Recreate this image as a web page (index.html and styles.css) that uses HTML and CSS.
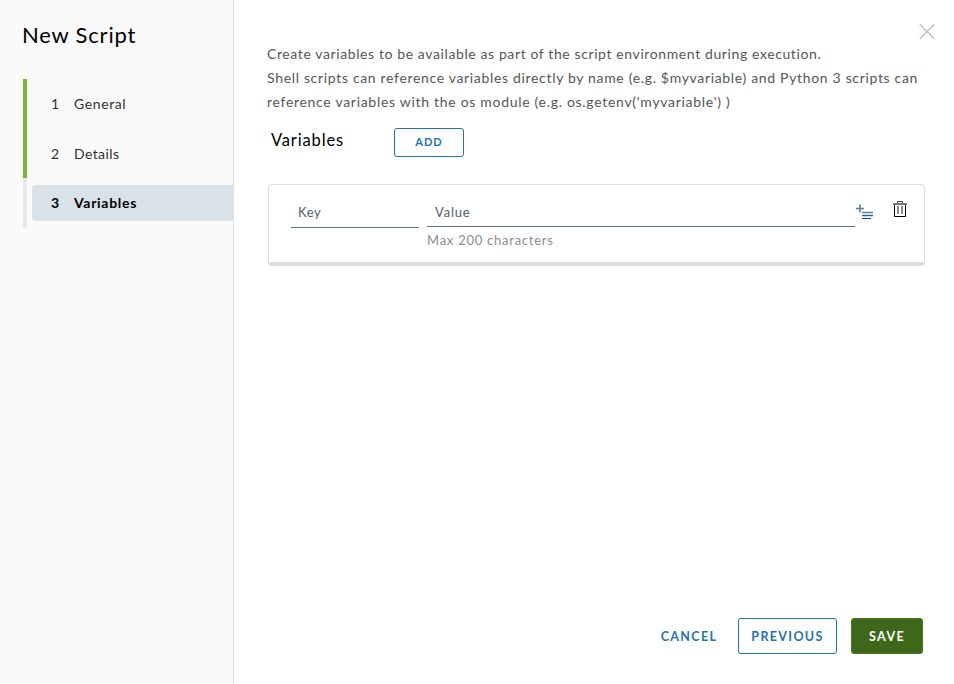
FILE: index.html
```html
<!DOCTYPE html>
<html lang="en">
<head>
<meta charset="utf-8">
<title>New Script</title>
<link rel="stylesheet" href="styles.css">
</head>
<body>
<div class="wizard">
  <aside class="sidebar">
    <h1 class="title">New Script</h1>
    <ol class="steps">
      <li class="step first"><span class="num">1</span><span class="label general">General</span></li>
      <li class="step second"><span class="num">2</span><span class="label details">Details</span></li>
      <li class="step active"><div class="pill"><span class="num">3</span><span class="label variables">Variables</span></div></li>
    </ol>
  </aside>
  <main class="content">
    <header class="top">
      <button class="close" aria-label="Close"><svg width="16" height="16" viewBox="0 0 16 16"><path d="M1.2 0.7 14.8 14.3M14.8 0.7 1.2 14.3" fill="none" stroke="#c0c0c0" stroke-width="1.5" stroke-linecap="round"/></svg></button>
    </header>
    <div class="intro">
      <div class="line one">Create variables to be available as part of the script environment during execution.</div>
      <div class="line two">Shell scripts can reference variables directly by name (e.g. $myvariable) and Python 3 scripts can</div>
      <div class="line three">reference variables with the os module (e.g. os.getenv('myvariable') )</div>
    </div>
    <div class="heading">
      <h2 class="subtitle">Variables</h2>
      <button class="btn small">ADD</button>
    </div>
    <section class="card">
      <div class="field key"><span class="placeholder">Key</span></div>
      <div class="value-group">
        <div class="field value"><span class="placeholder">Value</span></div>
        <div class="hint">Max 200 characters</div>
      </div>
      <svg class="add-text" width="18" height="18" viewBox="0 0 18 18"><path d="M4 .5v8M0 4.5h8" stroke="#5a83a1" stroke-width="1.7"/><path d="M6 8.5h11" stroke="#5a83a1" stroke-width="1.5"/><path d="M6 11.5h11" stroke="#34658a" stroke-width="1.5"/><path d="M6 14.5h9" stroke="#08477a"/></svg>
      <svg class="trash" width="14" height="18" viewBox="0 0 14 18"><path d="M0 3h14" stroke="#777" stroke-width="2"/><path d="M4.5 2V.5h5V2" fill="none" stroke="#444"/><path d="M1.5 4v11.5h11V4" fill="none" stroke="#000"/><path d="M5 5v8M9 5v8" stroke="#888" stroke-width="2"/></svg>
    </section>
    <footer class="actions">
      <button class="btn link">CANCEL</button>
      <button class="btn previous">PREVIOUS</button>
      <button class="btn save">SAVE</button>
    </footer>
  </main>
</div>
</body>
</html>
```
FILE: styles.css
```css
* { box-sizing: border-box; }
body { margin: 0; background: #fff; font-family: Lato, "Liberation Sans", sans-serif; font-size: 14px; color: #565656; }
h1, h2, ol { margin: 0; padding: 0; font-weight: 400; list-style: none; }
button { font: inherit; padding: 0; margin: 0; background: none; border: 0; }
svg { display: block; }
.wizard { display: flex; height: 684px; overflow: hidden; }
.sidebar { width: 234px; background: #fafafa; border-right: 1px solid #e0e0e0; padding: 20px 0 0 23px; flex: none; }
.title { margin-left: -1px; font-size: 22px; line-height: 30px; color: #000; white-space: nowrap; letter-spacing: 0.8px; }
.steps { margin-top: 29px; }
.step { display: flex; align-items: center; height: 50px; border-left: 4px solid #78b43c; padding-left: 24px; color: #313131; }
.first { padding-bottom: 1px; }
.second { height: 49px; }
.step.active { border-left-color: #e8e8e8; padding-left: 5px; color: #000; font-weight: 700; }
.pill { display: flex; align-items: center; flex: 1; height: 36px; padding: 0 0 2px 19px; background: #d9e2e8; border-radius: 3px 0 0 3px; }
.num { width: 23px; }
.general { letter-spacing: 0.6px; }
.details { letter-spacing: 0.4px; }
.variables { letter-spacing: 0.7px; }
.content { flex: 1; display: flex; flex-direction: column; padding: 24px 19px 30px 33px; }
.top { display: flex; justify-content: flex-end; height: 18px; }
.close { width: 16px; height: 16px; }
.line { line-height: 24px; white-space: nowrap; }
.one { letter-spacing: 0.605px; }
.two { letter-spacing: 0.67px; }
.three { letter-spacing: 0.7px; }
.heading { display: flex; padding: 14px 0 0 4px; }
.subtitle { width: 123px; font-size: 16.5px; line-height: 25px; color: #000; letter-spacing: 0.85px; }
.btn { border-radius: 3px; color: #2574a9; font-weight: 700; font-size: 12.5px; letter-spacing: 1.35px; }
.small { width: 70px; height: 29px; border: 1px solid #2574a9; padding-bottom: 2px; font-size: 11px; letter-spacing: 1px; }
.card { display: flex; width: 657px; height: 82px; margin: 27px 0 0 1px; padding: 14px 0 0 22px; border: 1px solid #ddd; border-bottom-width: 4px; border-radius: 4px; }
.field { border-bottom: 1px solid #60737d; height: 28px; line-height: 26px; padding-left: 7px; color: #4f6169; font-size: 13px; letter-spacing: 0.6px; }
.key { width: 128px; height: 29px; margin-right: 8px; }
.value { width: 428px; padding-left: 8px; letter-spacing: 0.8px; }
.hint { font-size: 13px; line-height: 27px; color: #8c8c8c; letter-spacing: 0.75px; }
.add-text { margin: 5px 0 0 1px; }
.trash { margin: 2px 0 0 19px; }
.actions { display: flex; margin-top: auto; margin-right: 12px; justify-content: flex-end; }
.actions .btn { height: 36px; }
.link { width: 60px; margin-right: 19px; white-space: nowrap; }
.previous { width: 99px; border: 1px solid #2574a9; margin-right: 14px; }
.save { width: 72px; background: #3e6819; }
.actions .save { border: 1px solid #477b1b; color: #fff; }
```
